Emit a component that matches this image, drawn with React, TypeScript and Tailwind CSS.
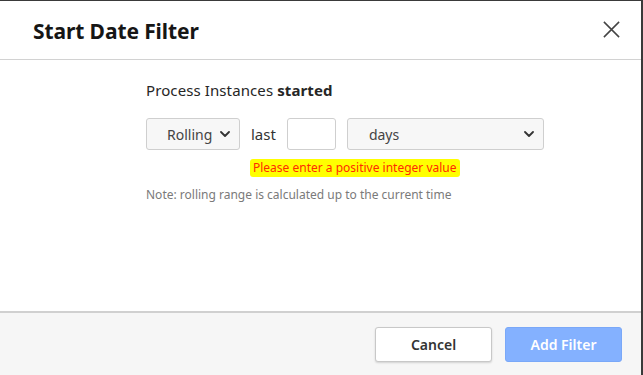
import React from "react";

function Chevron({ className }: { className?: string }) {
  return (
    <svg viewBox="0 0 10 6" width="10" height="6" className={className}>
      <path d="M1 1 L5 5 L9 1" fill="none" stroke="#333" strokeWidth="1.8" strokeLinecap="round" strokeLinejoin="round" />
    </svg>
  );
}

export default function App() {
  const font = { fontFamily: '"Noto Sans", "Open Sans", sans-serif' };
  return (
    <div className="w-[643px] h-[375px] bg-[#3a3a3a] pt-px pr-[2px] overflow-hidden" style={font}>
      <div className="bg-white h-full flex flex-col">
        <div className="h-[59px] flex items-center justify-between pl-[33px] pr-[20px] border-b border-[#d2d2d2] shrink-0">
          <div className="text-[21px] font-bold text-[#161616] tracking-[-0.1px] mt-[3px]">Start Date Filter</div>
          <svg viewBox="0 0 20 20" width="19" height="19" className="mt-[-2px]">
            <path d="M2 2 L18 18 M18 2 L2 18" stroke="#444" strokeWidth="1.6" />
          </svg>
        </div>
        <div className="flex-1 pl-[146px] pt-[20px]">
          <div className="text-[15px] text-[#262626] leading-[20px] tracking-[0.1px]">
            Process Instances <span className="font-bold">started</span>
          </div>
          <div className="flex items-center mt-[18px] h-[32px]">
            <div className="w-[94px] h-[32px] border border-[#cfcfcf] rounded-[3px] bg-[#f7f7f7] flex items-center pl-[20px] pr-[9px] justify-between">
              <span className="text-[14px] text-[#444]">Rolling</span>
              <Chevron />
            </div>
            <span className="ml-[11px] text-[15px] text-[#333]">last</span>
            <div className="ml-[11px] w-[49px] h-[32px] border border-[#cfcfcf] rounded-[3px] bg-white" />
            <div className="ml-[11px] w-[197px] h-[32px] border border-[#cfcfcf] rounded-[3px] bg-[#f7f7f7] flex items-center pl-[21px] pr-[9px] justify-between">
              <span className="text-[14px] text-[#444]">days</span>
              <Chevron />
            </div>
          </div>
          <div className="mt-[9px] ml-[104px] inline-block bg-[#ffff00] rounded-[3px] px-[3px] text-[12px] leading-[18px] text-[#ff2a00]">
            Please enter a positive integer value
          </div>
          <div className="mt-[8px] text-[12px] text-[#7a7a7a] leading-[18px]">
            Note: rolling range is calculated up to the current time
          </div>
        </div>
        <div className="h-[64px] shrink-0 bg-[#f6f6f6] border-t-2 border-[#d0d0d0] flex justify-end items-start pt-[14px] pr-[19px] gap-[13px]">
          <button className="w-[117px] h-[35px] bg-white border border-[#c8c8c8] rounded-[3px] shadow-[0_1px_2px_rgba(0,0,0,0.15)] text-[14px] font-semibold text-[#333]">
            Cancel
          </button>
          <button className="w-[117px] h-[35px] bg-[#84b1ff] rounded-[3px] text-[14px] font-semibold text-white border border-[#7aa8f8]">
            Add Filter
          </button>
        </div>
      </div>
    </div>
  );
}
